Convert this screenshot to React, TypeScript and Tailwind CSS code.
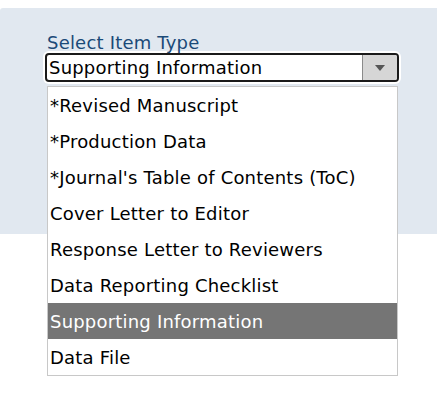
import React from "react";

const items = [
  "*Revised Manuscript",
  "*Production Data",
  "*Journal's Table of Contents (ToC)",
  "Cover Letter to Editor",
  "Response Letter to Reviewers",
  "Data Reporting Checklist",
  "Supporting Information",
  "Data File",
];

export default function App() {
  const selected = "Supporting Information";

  return (
    <div
      className="w-[437px] h-[399px] bg-white overflow-hidden relative"
      style={{ fontFamily: '"DejaVu Sans", Verdana, sans-serif' }}
    >
      {/* Panel */}
      <div className="mt-[8px] h-[226px] bg-[#e1e8f0] rounded-tl-[3px] pl-[45px] pt-[25px]">
        <div className="text-[18px] leading-[20px] text-[#1b4a78] pl-[2px] tracking-[0.2px]">
          Select Item Type
        </div>
        <div className="w-[354px] h-[29px] rounded-[4px] border-2 border-[#1a1a1a] bg-white flex items-stretch overflow-hidden shadow-[0_0_0_2px_#ffffff]">
          <div className="flex-1 text-[18px] leading-[25px] text-black pl-[2px] tracking-[0.2px]">
            {selected}
          </div>
          <div className="w-[35px] bg-[#d6d6d6] border-l border-[#8a8a8a] flex items-center justify-center">
            <svg width="10" height="6" viewBox="0 0 10 6">
              <path d="M0 0 L10 0 L5 6 Z" fill="#555555" />
            </svg>
          </div>
        </div>
      </div>

      {/* Dropdown list */}
      <div className="absolute left-[47px] top-[86px] w-[351px] bg-white border border-[#c8c8c8]">
        {items.map((it) => (
          <div
            key={it}
            className={`h-[36px] pl-[2px] text-[18px] leading-[38px] tracking-[0.2px] ${
              it === selected ? "bg-[#757575] text-white" : "text-black"
            }`}
          >
            {it}
          </div>
        ))}
      </div>
    </div>
  );
}
